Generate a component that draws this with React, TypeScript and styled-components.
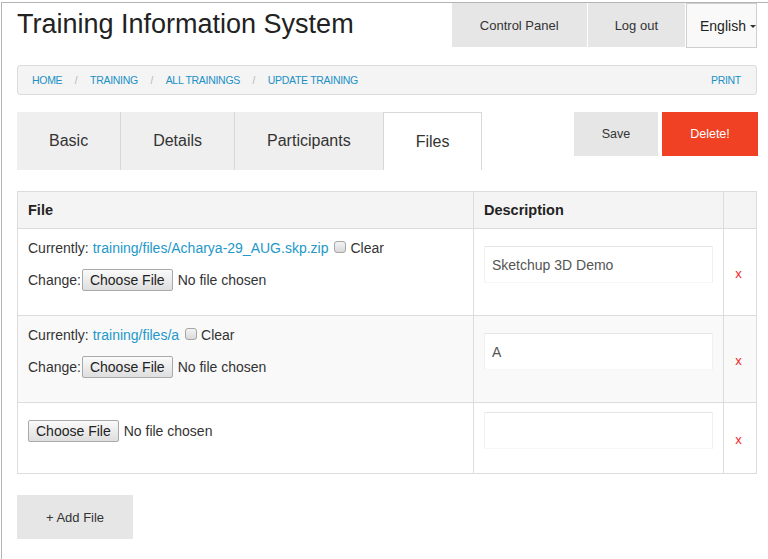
import React from "react";
import styled, { createGlobalStyle } from "styled-components";

const GlobalStyle = createGlobalStyle`
  html, body { margin: 0; padding: 0; background: #fff; }
  body {
    font-family: "Liberation Sans", Arial, sans-serif;
    color: #222;
    -webkit-font-smoothing: antialiased;
  }
  * { box-sizing: border-box; }
`;

const Frame = styled.div`
  margin: 2px 0 0 1px;
  border-top: 1px solid #b4b4b4;
  border-left: 1px solid #b4b4b4;
  min-height: 557px;
`;

const Container = styled.div`
  width: 740px;
  margin-left: 15px;
`;

const Header = styled.header`
  display: flex;
  justify-content: space-between;
  align-items: flex-start;
`;

const Title = styled.h1`
  margin: 0;
  padding-top: 3px;
  font-size: 27px;
  line-height: 36px;
  font-weight: normal;
  color: #222;
`;

const Nav = styled.nav`
  display: flex;
  align-items: flex-start;
  gap: 1px;
`;

const NavButton = styled.a<{ $pad?: number }>`
  display: flex;
  align-items: center;
  justify-content: center;
  height: 44px;
  padding: 0 ${(p) => p.$pad ?? 27}px;
  background: #e6e6e6;
  color: #333;
  font-size: 13px;
  text-decoration: none;
  cursor: pointer;
`;

const LangSelect = styled.div`
  display: flex;
  align-items: center;
  height: 45px;
  width: 71px;
  padding: 0 0 0 13px;
  border: 1px solid #cfcfcf;
  background: #f9f9f9;
  color: #222;
  font-size: 14px;
  gap: 4px;
`;

const Caret = styled.span`
  display: inline-block;
  width: 0;
  height: 0;
  border-left: 3px solid transparent;
  border-right: 3px solid transparent;
  border-top: 3px solid #333;
  margin-top: 1px;
`;

const Breadcrumb = styled.nav`
  display: flex;
  align-items: center;
  justify-content: space-between;
  margin-top: 17px;
  height: 30px;
  padding: 0 15px 0 14px;
  border: 1px solid #dcdcdc;
  border-radius: 3px;
  background: #f4f4f4;
`;

const Crumbs = styled.div`
  display: flex;
  align-items: center;
`;

const Crumb = styled.a`
  font-family: "Liberation Sans", Arial, sans-serif;
  font-size: 10.5px;
  letter-spacing: -0.3px;
  text-transform: uppercase;
  color: #2190c4;
  text-decoration: none;
`;

const Sep = styled.span`
  font-size: 10px;
  color: #b5b5b5;
  margin: 0 12.5px;
`;

const TabBar = styled.div`
  display: flex;
  justify-content: space-between;
  align-items: flex-start;
  margin-top: 17px;
`;

const Tabs = styled.div`
  display: flex;
`;

const Tab = styled.div<{ $active?: boolean }>`
  display: flex;
  align-items: center;
  height: 58px;
  padding: 0 32px;
  font-size: 16px;
  color: #333;
  background: ${(p) => (p.$active ? "#fff" : "#efefef")};
  border-left: 1px solid #d8d8d8;
  border-top: ${(p) => (p.$active ? "1px solid #d8d8d8" : "none")};
  border-right: ${(p) => (p.$active ? "1px solid #d8d8d8" : "none")};
  &:first-child {
    border-left: none;
  }
`;

const Actions = styled.div`
  display: flex;
  gap: 4px;
  margin-right: -1px;
`;

const ActionButton = styled.button<{ $danger?: boolean; $w: number }>`
  width: ${(p) => p.$w}px;
  height: 44px;
  border: none;
  background: ${(p) => (p.$danger ? "#f04124" : "#e6e6e6")};
  color: ${(p) => (p.$danger ? "#fff" : "#333")};
  font-family: "Liberation Sans", Arial, sans-serif;
  font-size: 12.5px;
  padding: 0;
  cursor: pointer;
`;

const Table = styled.table`
  width: 100%;
  margin-top: 21px;
  border-collapse: collapse;
  border: 1px solid #dcdcdc;
`;

const Th = styled.th<{ $w?: number }>`
  width: ${(p) => (p.$w ? `${p.$w}px` : "auto")};
  height: 37px;
  padding: 0 10px;
  text-align: left;
  font-size: 14.5px;
  font-weight: bold;
  color: #222;
  background: #f4f4f4;
  border: 1px solid #dcdcdc;
`;

const Row = styled.tr<{ $alt?: boolean }>`
  background: ${(p) => (p.$alt ? "#f9f9f9" : "#fff")};
`;

const Td = styled.td<{ $remove?: boolean }>`
  padding: ${(p) => (p.$remove ? "9px 13px 8px 10px" : "9px 10px 8px")};
  vertical-align: middle;
  border: 1px solid #dcdcdc;
  font-size: 14px;
  color: #333;
  text-align: ${(p) => (p.$remove ? "center" : "left")};
`;

const CurrentLine = styled.div`
  display: flex;
  align-items: center;
  height: 20px;
  white-space: nowrap;
`;

const FileLink = styled.a`
  color: #2398c9;
  text-decoration: none;
  margin-left: 4px;
`;

const Check = styled.input`
  appearance: none;
  width: 12px;
  height: 12px;
  margin: 0 4px 3px 6px;
  border: 1px solid #a6a6a6;
  border-radius: 3px;
  background: linear-gradient(#f4f4f4, #d9d9d9);
`;

const ChangeLine = styled.div<{ $first?: boolean }>`
  display: flex;
  align-items: center;
  margin-top: ${(p) => (p.$first ? 0 : 11)}px;
  margin-bottom: 16px;
  white-space: nowrap;
`;

const FileInput = styled.input<{ $flush?: boolean }>`
  margin: 0 0 0 ${(p) => (p.$flush ? 0 : 1)}px;
  font-family: "Liberation Sans", Arial, sans-serif;
  font-size: 14px;
  color: #333;
  &::file-selector-button {
    height: 22px;
    padding: 0 7px;
    margin-right: 5px;
    font-family: "Liberation Sans", Arial, sans-serif;
    font-size: 14px;
    color: #222;
    border: 1px solid #a9a9a9;
    border-radius: 2px;
    background: linear-gradient(#fafafa, #dedede);
  }
`;

const DescInput = styled.input`
  display: block;
  width: 100%;
  height: 37px;
  margin: 0 0 16px 0;
  padding: 0 7px;
  border: 1px solid #f1f1f1;
  border-top-color: #e6e6e6;
  border-bottom-color: #f7f7f7;
  background: #fff;
  font-family: "Liberation Sans", Arial, sans-serif;
  font-size: 14px;
  color: #555;
  outline: none;
`;

const RemoveLink = styled.a`
  color: #f21f1f;
  font-size: 13px;
  text-decoration: none;
  cursor: pointer;
`;

const AddButton = styled.button`
  display: block;
  width: 116px;
  height: 44px;
  margin-top: 21px;
  border: none;
  background: #e6e6e6;
  color: #333;
  font-family: "Liberation Sans", Arial, sans-serif;
  font-size: 13px;
  cursor: pointer;
`;

type FileRow = { current?: string; desc: string };

const rows: FileRow[] = [
  { current: "training/files/Acharya-29_AUG.skp.zip", desc: "Sketchup 3D Demo" },
  { current: "training/files/a", desc: "A" },
  { desc: "" },
];

export default function App() {
  return (
    <>
      <GlobalStyle />
      <Frame>
        <Container>
          <Header>
            <Title>Training Information System</Title>
            <Nav>
              <NavButton $pad={28}>Control Panel</NavButton>
              <NavButton $pad={27}>Log out</NavButton>
              <LangSelect>
                English <Caret />
              </LangSelect>
            </Nav>
          </Header>

          <Breadcrumb>
            <Crumbs>
              <Crumb>Home</Crumb>
              <Sep>/</Sep>
              <Crumb>Training</Crumb>
              <Sep>/</Sep>
              <Crumb>All Trainings</Crumb>
              <Sep>/</Sep>
              <Crumb>Update Training</Crumb>
            </Crumbs>
            <Crumb>Print</Crumb>
          </Breadcrumb>

          <TabBar>
            <Tabs>
              <Tab>Basic</Tab>
              <Tab>Details</Tab>
              <Tab>Participants</Tab>
              <Tab $active>Files</Tab>
            </Tabs>
            <Actions>
              <ActionButton $w={84}>Save</ActionButton>
              <ActionButton $w={96} $danger>
                Delete!
              </ActionButton>
            </Actions>
          </TabBar>

          <Table>
            <thead>
              <tr>
                <Th>File</Th>
                <Th $w={250}>Description</Th>
                <Th $w={33}></Th>
              </tr>
            </thead>
            <tbody>
              {rows.map((r, i) => (
                <Row key={i} $alt={i % 2 === 1}>
                  <Td>
                    {r.current ? (
                      <>
                        <CurrentLine>
                          Currently:
                          <FileLink>{r.current}</FileLink>
                          <Check type="checkbox" />
                          Clear
                        </CurrentLine>
                        <ChangeLine>
                          Change:
                          <FileInput type="file" />
                        </ChangeLine>
                      </>
                    ) : (
                      <ChangeLine $first>
                        <FileInput type="file" $flush />
                      </ChangeLine>
                    )}
                  </Td>
                  <Td>
                    <DescInput type="text" defaultValue={r.desc} />
                  </Td>
                  <Td $remove>
                    <RemoveLink>x</RemoveLink>
                  </Td>
                </Row>
              ))}
            </tbody>
          </Table>

          <AddButton>+ Add File</AddButton>
        </Container>
      </Frame>
    </>
  );
}
